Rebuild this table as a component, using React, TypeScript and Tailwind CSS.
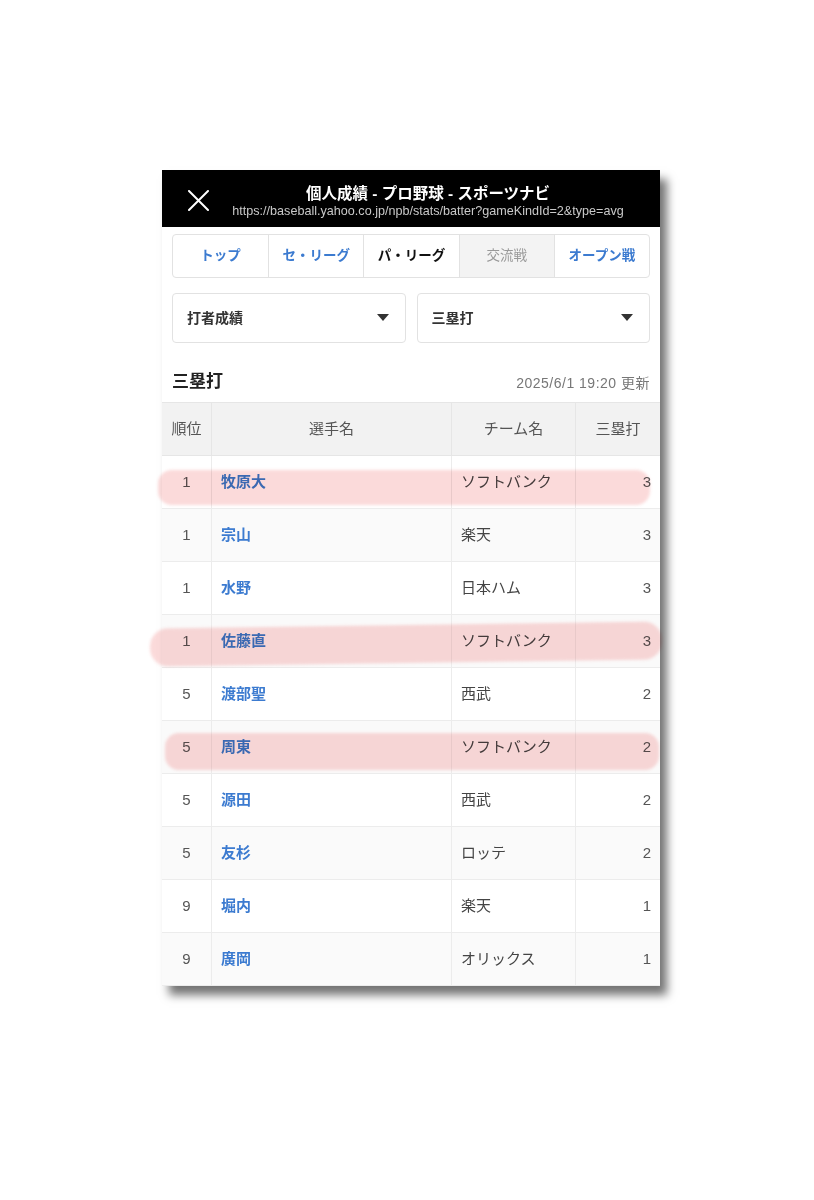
const FONT = { fontFamily: '"Liberation Sans", "Noto Sans CJK JP", sans-serif' };

type Row = { rank: number; name: string; team: string; value: number };

const ROWS: Row[] = [
  { rank: 1, name: '牧原大', team: 'ソフトバンク', value: 3 },
  { rank: 1, name: '宗山', team: '楽天', value: 3 },
  { rank: 1, name: '水野', team: '日本ハム', value: 3 },
  { rank: 1, name: '佐藤直', team: 'ソフトバンク', value: 3 },
  { rank: 5, name: '渡部聖', team: '西武', value: 2 },
  { rank: 5, name: '周東', team: 'ソフトバンク', value: 2 },
  { rank: 5, name: '源田', team: '西武', value: 2 },
  { rank: 5, name: '友杉', team: 'ロッテ', value: 2 },
  { rank: 9, name: '堀内', team: '楽天', value: 1 },
  { rank: 9, name: '廣岡', team: 'オリックス', value: 1 },
];

const TABS = [
  { label: 'トップ', kind: 'link' },
  { label: 'セ・リーグ', kind: 'link' },
  { label: 'パ・リーグ', kind: 'active' },
  { label: '交流戦', kind: 'off' },
  { label: 'オープン戦', kind: 'link' },
];

function Caret() {
  return (
    <svg width="12" height="8" viewBox="0 0 12 8" aria-hidden="true">
      <path d="M0 0h12L6 7z" fill="#333" />
    </svg>
  );
}

function Select({ label }: { label: string }) {
  return (
    <div className="flex h-[50px] items-center justify-between rounded-[4px] border border-[#e2e2e2] pl-[14px] pr-[16px]">
      <span className="text-[14px] font-bold text-[#333]">{label}</span>
      <Caret />
    </div>
  );
}

export default function App() {
  return (
    <div className="h-[1200px] w-[814px] bg-white pl-[162px] pt-[170px]" style={FONT}>
      <div className="relative w-[498px] bg-white shadow-[7px_9px_9px_rgba(0,0,0,0.55)]">
        {/* title bar */}
        <div className="relative flex h-[57px] flex-col items-center justify-center bg-black pt-[7px]">
          <svg className="absolute left-[26px] top-[20px]" width="21" height="21" viewBox="0 0 21 21" aria-hidden="true">
            <path d="M1 1l19 19M20 1L1 20" stroke="#fff" strokeWidth="2" strokeLinecap="round" />
          </svg>
          <div className="ml-[34px] text-[15.5px] font-bold leading-[19px] text-white">個人成績 - プロ野球 - スポーツナビ</div>
          <div className="ml-[34px] text-[12.6px] leading-[17px] text-[#c9c9c9]">
            https://baseball.yahoo.co.jp/npb/stats/batter?gameKindId=2&amp;type=avg
          </div>
        </div>

        <div className="px-[10px] pt-[7px]">
          <div className="grid h-[44px] grid-cols-5 overflow-hidden rounded-[4px] border border-[#e2e2e2]">
            {TABS.map((t, i) => (
              <div
                key={t.label}
                className={
                  'flex items-center justify-center text-[13.5px] ' +
                  (i > 0 ? 'border-l border-[#e2e2e2] ' : '') +
                  (t.kind === 'active'
                    ? 'font-bold text-[#111]'
                    : t.kind === 'off'
                      ? 'bg-[#f3f3f3] text-[#999]'
                      : 'font-bold text-[#3c7bd0]')
                }
              >
                {t.label}
              </div>
            ))}
          </div>

          <div className="mt-[15px] grid grid-cols-2 gap-[11px]">
            <Select label="打者成績" />
            <Select label="三塁打" />
          </div>

          <div className="flex h-[59px] items-end justify-between pb-[8px]">
            <span className="text-[17px] font-bold leading-[24px] text-[#222]">三塁打</span>
            <span className="text-[14px] leading-[22px] tracking-[0.5px] text-[#777]">2025/6/1 19:20 更新</span>
          </div>
        </div>

        {/* table */}
        <div className="grid grid-cols-[49px_240px_124px_85px] border-t border-[#e6e6e6] text-[15px]">
          <div className="flex h-[53px] items-center justify-center border-b border-[#e6e6e6] bg-[#f2f2f2] text-[#555]">順位</div>
          <div className="flex h-[53px] items-center justify-center border-b border-l border-[#e6e6e6] bg-[#f2f2f2] text-[#555]">選手名</div>
          <div className="flex h-[53px] items-center justify-center border-b border-l border-[#e6e6e6] bg-[#f2f2f2] text-[#555]">チーム名</div>
          <div className="flex h-[53px] items-center justify-center border-b border-l border-[#e6e6e6] bg-[#f2f2f2] text-[#555]">三塁打</div>
          {ROWS.map((r, i) => {
            const bg = i % 2 === 1 ? 'bg-[#fafafa]' : 'bg-white';
            return [
              <div key={`r${i}`} className={`flex h-[53px] items-center justify-center border-b border-[#ececec] text-[#555] ${bg}`}>
                {r.rank}
              </div>,
              <div key={`n${i}`} className={`flex h-[53px] items-center border-b border-l border-[#ececec] pl-[9px] font-bold text-[#3c7bd0] ${bg}`}>
                {r.name}
              </div>,
              <div key={`t${i}`} className={`flex h-[53px] items-center border-b border-l border-[#ececec] pl-[9px] text-[#444] ${bg}`}>
                {r.team}
              </div>,
              <div key={`v${i}`} className={`flex h-[53px] items-center justify-end border-b border-l border-[#ececec] pr-[9px] text-[#555] ${bg}`}>
                {r.value}
              </div>,
            ];
          })}
        </div>

        {/* marker highlights */}
        <div className="pointer-events-none absolute left-[-4px] top-[300px] h-[35px] w-[492px] rounded-[14px] bg-[#f4a3a3]/40 mix-blend-multiply blur-[1.5px]" />
        <div className="pointer-events-none absolute left-[-12px] top-[455px] h-[38px] w-[512px] -rotate-[0.8deg] rounded-[18px] bg-[#f4a3a3]/40 mix-blend-multiply blur-[1.5px]" />
        <div className="pointer-events-none absolute left-[3px] top-[563px] h-[37px] w-[494px] rounded-[14px] bg-[#f4a3a3]/40 mix-blend-multiply blur-[1.5px]" />
      </div>
    </div>
  );
}
